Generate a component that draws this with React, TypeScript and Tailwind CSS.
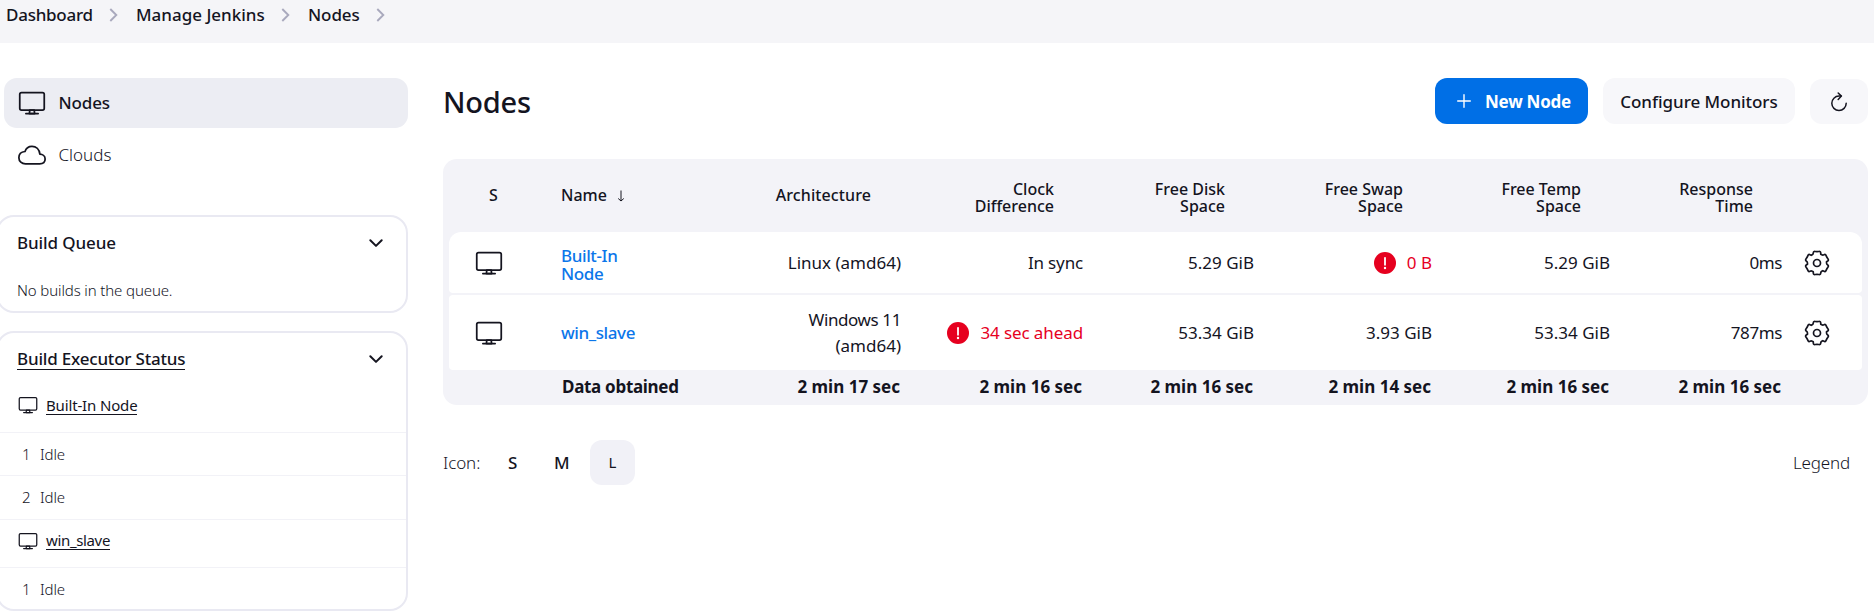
import type { ReactNode } from 'react';
import { IoCloudOutline } from 'react-icons/io5';

function Monitor({ className }: { className: string }) {
  return (
    <svg viewBox="0 0 512 512" className={className} fill="none" stroke="currentColor" strokeWidth="32" strokeLinejoin="round" strokeLinecap="round">
      <rect x="32" y="64" width="448" height="320" rx="32" />
      <path d="M304 448l-8-64h-80l-8 64h96z" />
      <path d="M368 448H144" />
    </svg>
  );
}

function gearPath() {
  const pts: [number, number][] = [];
  const at = (deg: number, r: number) => {
    const a = (deg * Math.PI) / 180;
    pts.push([13 + r * Math.cos(a), 13 + r * Math.sin(a)]);
  };
  for (let k = 0; k < 6; k++) {
    const c = -90 + k * 60;
    at(c - 37, 9.6);
    at(c - 23, 9.6);
    at(c - 17, 12.3);
    at(c, 11.3);
    at(c + 17, 12.3);
    at(c + 23, 9.6);
  }
  const n = pts.length;
  const mid = (i: number) => {
    const [a, b] = [pts[i % n], pts[(i + 1) % n]];
    return `${((a[0] + b[0]) / 2).toFixed(2)} ${((a[1] + b[1]) / 2).toFixed(2)}`;
  };
  let d = `M${mid(n - 1)}`;
  pts.forEach((p, i) => {
    d += `Q${p[0].toFixed(2)} ${p[1].toFixed(2)} ${mid(i)}`;
  });
  return d + 'Z';
}

const GEAR = gearPath();

function Gear() {
  return (
    <svg viewBox="0 0 26 26" className="ml-[21.5px] h-[26px] w-[26px]" fill="none" stroke="currentColor" strokeWidth="1.7" strokeLinejoin="round">
      <path d={GEAR} />
      <circle cx="13" cy="13" r="3.5" />
    </svg>
  );
}

function CrumbArrow() {
  return (
    <svg viewBox="0 0 10 16" className="h-4 w-2.5 text-[#a9a9bd]" fill="none" stroke="currentColor" strokeWidth="1.9">
      <path d="M1.3 2l6 6-6 6" />
    </svg>
  );
}

function Chevron() {
  return (
    <svg viewBox="0 0 16 16" className="h-4 w-4" fill="none" stroke="currentColor" strokeWidth="2" strokeLinecap="round" strokeLinejoin="round">
      <path d="M2.3 5.2L8 10.9l5.7-5.7" />
    </svg>
  );
}

function Refresh() {
  return (
    <svg viewBox="0 0 18 20" className="h-5 w-[18px]" fill="none" stroke="currentColor" strokeWidth="1.5" strokeLinecap="round" strokeLinejoin="round">
      <path d="M11 4.1H9a7.2 7.2 0 1 0 7.2 7.2" />
      <path d="M8.2 1l3.2 3.1-3.2 3.3" />
    </svg>
  );
}

function Alert({ children }: { children: ReactNode }) {
  return (
    <span className="flex items-center gap-[11px] text-[#e6001f]">
      <svg viewBox="0 0 22 22" className="h-[22px] w-[22px]">
        <circle cx="11" cy="11" r="11" fill="currentColor" />
        <path d="M11 5.8v7" stroke="#fff" strokeWidth="1.8" strokeLinecap="round" />
        <circle cx="11" cy="16" r="1.2" fill="#fff" />
      </svg>
      {children}
    </span>
  );
}

const GRID = 'grid grid-cols-[112px_159px_181px_182px_171px_178px_178px_172px_80px] items-center';

const HEADINGS: [string, string?][] = [
  ['Architecture'],
  ['Clock', 'Difference'],
  ['Free Disk', 'Space'],
  ['Free Swap', 'Space'],
  ['Free Temp', 'Space'],
  ['Response', 'Time'],
];

const TIMES = ['2 min 17 sec', '2 min 16 sec', '2 min 16 sec', '2 min 14 sec', '2 min 16 sec', '2 min 16 sec'];

function Cell({ children }: { children: ReactNode }) {
  return <div className="flex justify-end text-right">{children}</div>;
}

function Executor({ n, className }: { n: number; className: string }) {
  return (
    <div className={`flex items-center border-t border-[#f2f2f7] pl-6 text-[15px] font-light ${className}`}>
      <span className="w-[18px]">{n}</span>
      <span className="tracking-[-0.1px]">Idle</span>
    </div>
  );
}

export default function App() {
  return (
    <div className="h-[611px] w-[1874px] overflow-hidden bg-white font-['Noto_Sans',sans-serif] text-[17px] text-[#14141f]">
      <nav className="flex h-[43px] items-start bg-[#f5f5f8] pl-1.5 font-[475]">
        <div className="flex h-[30px] items-center whitespace-nowrap">
          <span className="w-[103px] tracking-[-0.25px]">Dashboard</span>
          <CrumbArrow />
          <span className="ml-[17px] w-[145px]">Manage Jenkins</span>
          <CrumbArrow />
          <span className="ml-[17px] w-[68px] tracking-[-0.1px]">Nodes</span>
          <CrumbArrow />
        </div>
      </nav>

      <div className="flex">
        <aside className="w-[408px] shrink-0 pt-[35px]">
          <div className="ml-1 flex h-[50px] items-center rounded-[13px] bg-[#ecedf3] pl-3.5 font-[475]">
            <Monitor className="h-[28px] w-[28px]" />
            <span className="ml-[12.5px] tracking-[-0.15px]">Nodes</span>
          </div>
          <div className="ml-1 mt-[2px] flex h-[50px] items-center pl-3.5 font-light">
            <IoCloudOutline className="h-[28px] w-[28px]" />
            <span className="ml-[12.5px]">Clouds</span>
          </div>

          <section className="-ml-1 mt-[35px] h-[98px] rounded-[18px] border-2 border-[#e9e9f2] pl-[19px] pr-[22px]">
            <div className="flex h-[52px] items-center justify-between font-[475]">
              <span className="tracking-[-0.1px]">Build Queue</span>
              <Chevron />
            </div>
            <p className="mt-[10px] text-[15px] font-light leading-[22px] tracking-[-0.12px]">No builds in the queue.</p>
          </section>

          <section className="-ml-1 mt-[18px] h-[280px] rounded-[18px] border-2 border-[#e9e9f2]">
            <div className="flex h-[52px] items-center justify-between pl-[19px] pr-[22px] font-[475]">
              <span className="border-b border-current leading-[20px] tracking-[-0.2px]">Build Executor Status</span>
              <Chevron />
            </div>
            <div className="flex h-[47px] items-center pb-[7px] pl-5 text-[15px]">
              <Monitor className="h-[20px] w-[20px]" />
              <span className="ml-2 border-b border-current leading-[18px] tracking-[-0.15px]">Built-In Node</span>
            </div>
            <Executor n={1} className="h-[43px]" />
            <Executor n={2} className="h-[44px]" />
            <div className="flex h-[48px] items-center border-t border-[#f2f2f7] pb-1.5 pl-5 text-[15px]">
              <Monitor className="h-[20px] w-[20px]" />
              <span className="ml-2 border-b border-current leading-[18px] tracking-[-0.35px]">win_slave</span>
            </div>
            <Executor n={1} className="h-[44px]" />
          </section>
        </aside>

        <main className="ml-[35px] w-[1425px] shrink-0 pt-[35px]">
          <div className="flex h-[46px] items-center justify-between">
            <h1 className="pt-0.5 text-[29px] font-[475] tracking-[-0.2px]">Nodes</h1>
            <div className="flex items-end gap-[15px]">
              <button className="flex h-[46px] w-[153px] items-center rounded-[12px] bg-[#006fe6] pl-[22px] font-bold text-white">
                <svg viewBox="0 0 14 14" className="h-3.5 w-3.5" stroke="currentColor" strokeWidth="1.4" strokeLinecap="round">
                  <path d="M7 .7v12.6M.7 7h12.6" />
                </svg>
                <span className="ml-[14px] pt-px tracking-[-0.25px]">New Node</span>
              </button>
              <button className="h-[46px] w-[192px] rounded-[12px] bg-[#f7f7fa] pt-px font-[475] tracking-[-0.05px]">Configure Monitors</button>
              <button className="flex h-[45px] w-[58px] items-center justify-center rounded-[12px] bg-[#f7f7fa]">
                <Refresh />
              </button>
            </div>
          </div>

          <div className="mt-[35px] h-[246px] rounded-[14px] bg-[#f3f3f8] px-1.5">
            <div className={`${GRID} h-[73px] text-[16px] font-[460] leading-[17px]`}>
              <span className="pl-10">S</span>
              <span className="flex items-center gap-2.5">
                Name
                <svg viewBox="0 0 8 12" className="h-3 w-2" fill="none" stroke="currentColor" strokeWidth="1">
                  <path d="M4 .5v10.5M1.2 8.5L4 11l2.8-2.5" />
                </svg>
              </span>
              {HEADINGS.map(([a, b]) => (
                <div key={a} className={b ? 'pr-[29px] pt-1 text-right' : 'pr-[30px] text-right tracking-[0.1px]'}>
                  <div>{a}</div>
                  {b && <div>{b}</div>}
                </div>
              ))}
            </div>

            <div className={`${GRID} h-[61px] rounded-b-[4px] rounded-t-[12px] bg-white`}>
              <Monitor className="ml-[26px] h-[28px] w-[28px]" />
              <div className="pt-1 font-[550] leading-[18px] tracking-[-0.4px] text-[#0b76ea]">
                <div>Built-In</div>
                <div>Node</div>
              </div>
              <Cell>Linux (amd64)</Cell>
              <Cell><span className="tracking-[-0.15px]">In sync</span></Cell>
              <Cell>5.29 GiB</Cell>
              <Cell><Alert>0 B</Alert></Cell>
              <Cell>5.29 GiB</Cell>
              <Cell><span className="tracking-[-0.4px]">0ms</span></Cell>
              <Gear />
            </div>

            <div className={`${GRID} mt-0.5 h-[75px] rounded-[4px] bg-white`}>
              <Monitor className="ml-[26px] h-[28px] w-[28px]" />
              <div className="font-[550] tracking-[-0.4px] text-[#0b76ea]">win_slave</div>
              <Cell>
                <div className="leading-[26px]">
                  <div className="tracking-[-0.4px]">Windows 11</div>
                  <div>(amd64)</div>
                </div>
              </Cell>
              <Cell><Alert><span className="tracking-[-0.1px]">34 sec ahead</span></Alert></Cell>
              <Cell>53.34 GiB</Cell>
              <Cell>3.93 GiB</Cell>
              <Cell>53.34 GiB</Cell>
              <Cell><span className="tracking-[-0.4px]">787ms</span></Cell>
              <Gear />
            </div>

            <div className={`${GRID} h-[34px] font-bold`}>
              <span />
              <span className="whitespace-nowrap pl-px tracking-[-0.3px]">Data obtained</span>
              {TIMES.map((t, i) => (
                <span key={i} className="whitespace-nowrap pr-px text-right">{t}</span>
              ))}
            </div>
          </div>

          <div className="mt-[35px] flex h-[45px] items-center">
            <span className="w-[65px] font-light tracking-[-0.1px]">Icon:</span>
            <span className="w-[46px] font-medium">S</span>
            <span className="w-[36px] font-medium">M</span>
            <span className="flex h-[45px] w-[45px] items-center justify-center rounded-[12px] bg-[#f1f1f7] text-[15px]">L</span>
            <span className="ml-auto pr-[18px] font-light tracking-[-0.15px]">Legend</span>
          </div>
        </main>
      </div>
    </div>
  );
}
